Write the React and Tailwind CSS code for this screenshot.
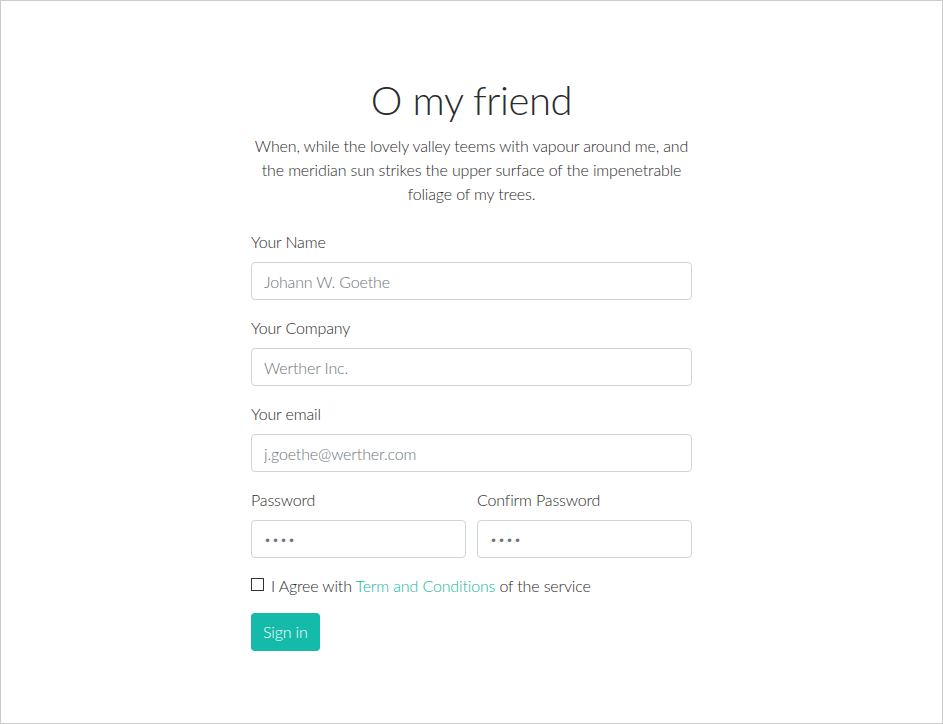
import React from "react";

const font = { fontFamily: "Lato, 'Open Sans', sans-serif" };

function Field({ label, placeholder, type = "text" }) {
  const isPassword = type === "password";
  return (
    <div className="mb-4">
      <label className="block mb-2 text-base leading-6">{label}</label>
      <input
        type={type}
        placeholder={placeholder}
        defaultValue={isPassword ? "1234" : undefined}
        className={`block w-full h-[38px] px-3 border border-[#ced4da] rounded-[4px] font-light text-[#6c757d] placeholder:text-[#6c757d] outline-none ${isPassword ? "text-[12px] tracking-[1px]" : "text-base tracking-[-0.15px]"}`}
      />
    </div>
  );
}

export default function App() {
  return (
    <div className="w-[943px] h-[724px] border border-[#cccccc] bg-white font-light text-[#2b2b2b] tracking-[-0.15px]" style={font}>
      <div className="w-[441px] mx-auto pt-[75px]">
        <h1 className="text-[40px] leading-[48px] text-center font-light mb-[10px] tracking-[-0.4px]">O my friend</h1>
        <p className="-mx-6 text-base leading-6 text-center mb-6 whitespace-nowrap">
          When, while the lovely valley teems with vapour around me, and
          <br />
          the meridian sun strikes the upper surface of the impenetrable
          <br />
          foliage of my trees.
        </p>
        <form>
          <Field label="Your Name" placeholder="Johann W. Goethe" />
          <Field label="Your Company" placeholder="Werther Inc." />
          <Field label="Your email" placeholder="j.goethe@werther.com" type="email" />
          <div className="flex gap-[11px]">
            <div className="flex-1">
              <Field label="Password" type="password" />
            </div>
            <div className="flex-1">
              <Field label="Confirm Password" type="password" />
            </div>
          </div>
          <div className="flex items-center h-6 mb-[15px]">
            <span className="w-[13px] h-[13px] border border-[#333333] mr-[7px] mt-[-4px]" />
            <span className="text-base">
              I Agree with <a href="#" className="text-[#13b5a3]">Term and Conditions</a> of the service
            </span>
          </div>
          <button
            type="button"
            className="h-[38px] px-3 bg-[#14bbaa] text-white text-base font-light rounded-[4px]"
          >
            Sign in
          </button>
        </form>
      </div>
    </div>
  );
}
